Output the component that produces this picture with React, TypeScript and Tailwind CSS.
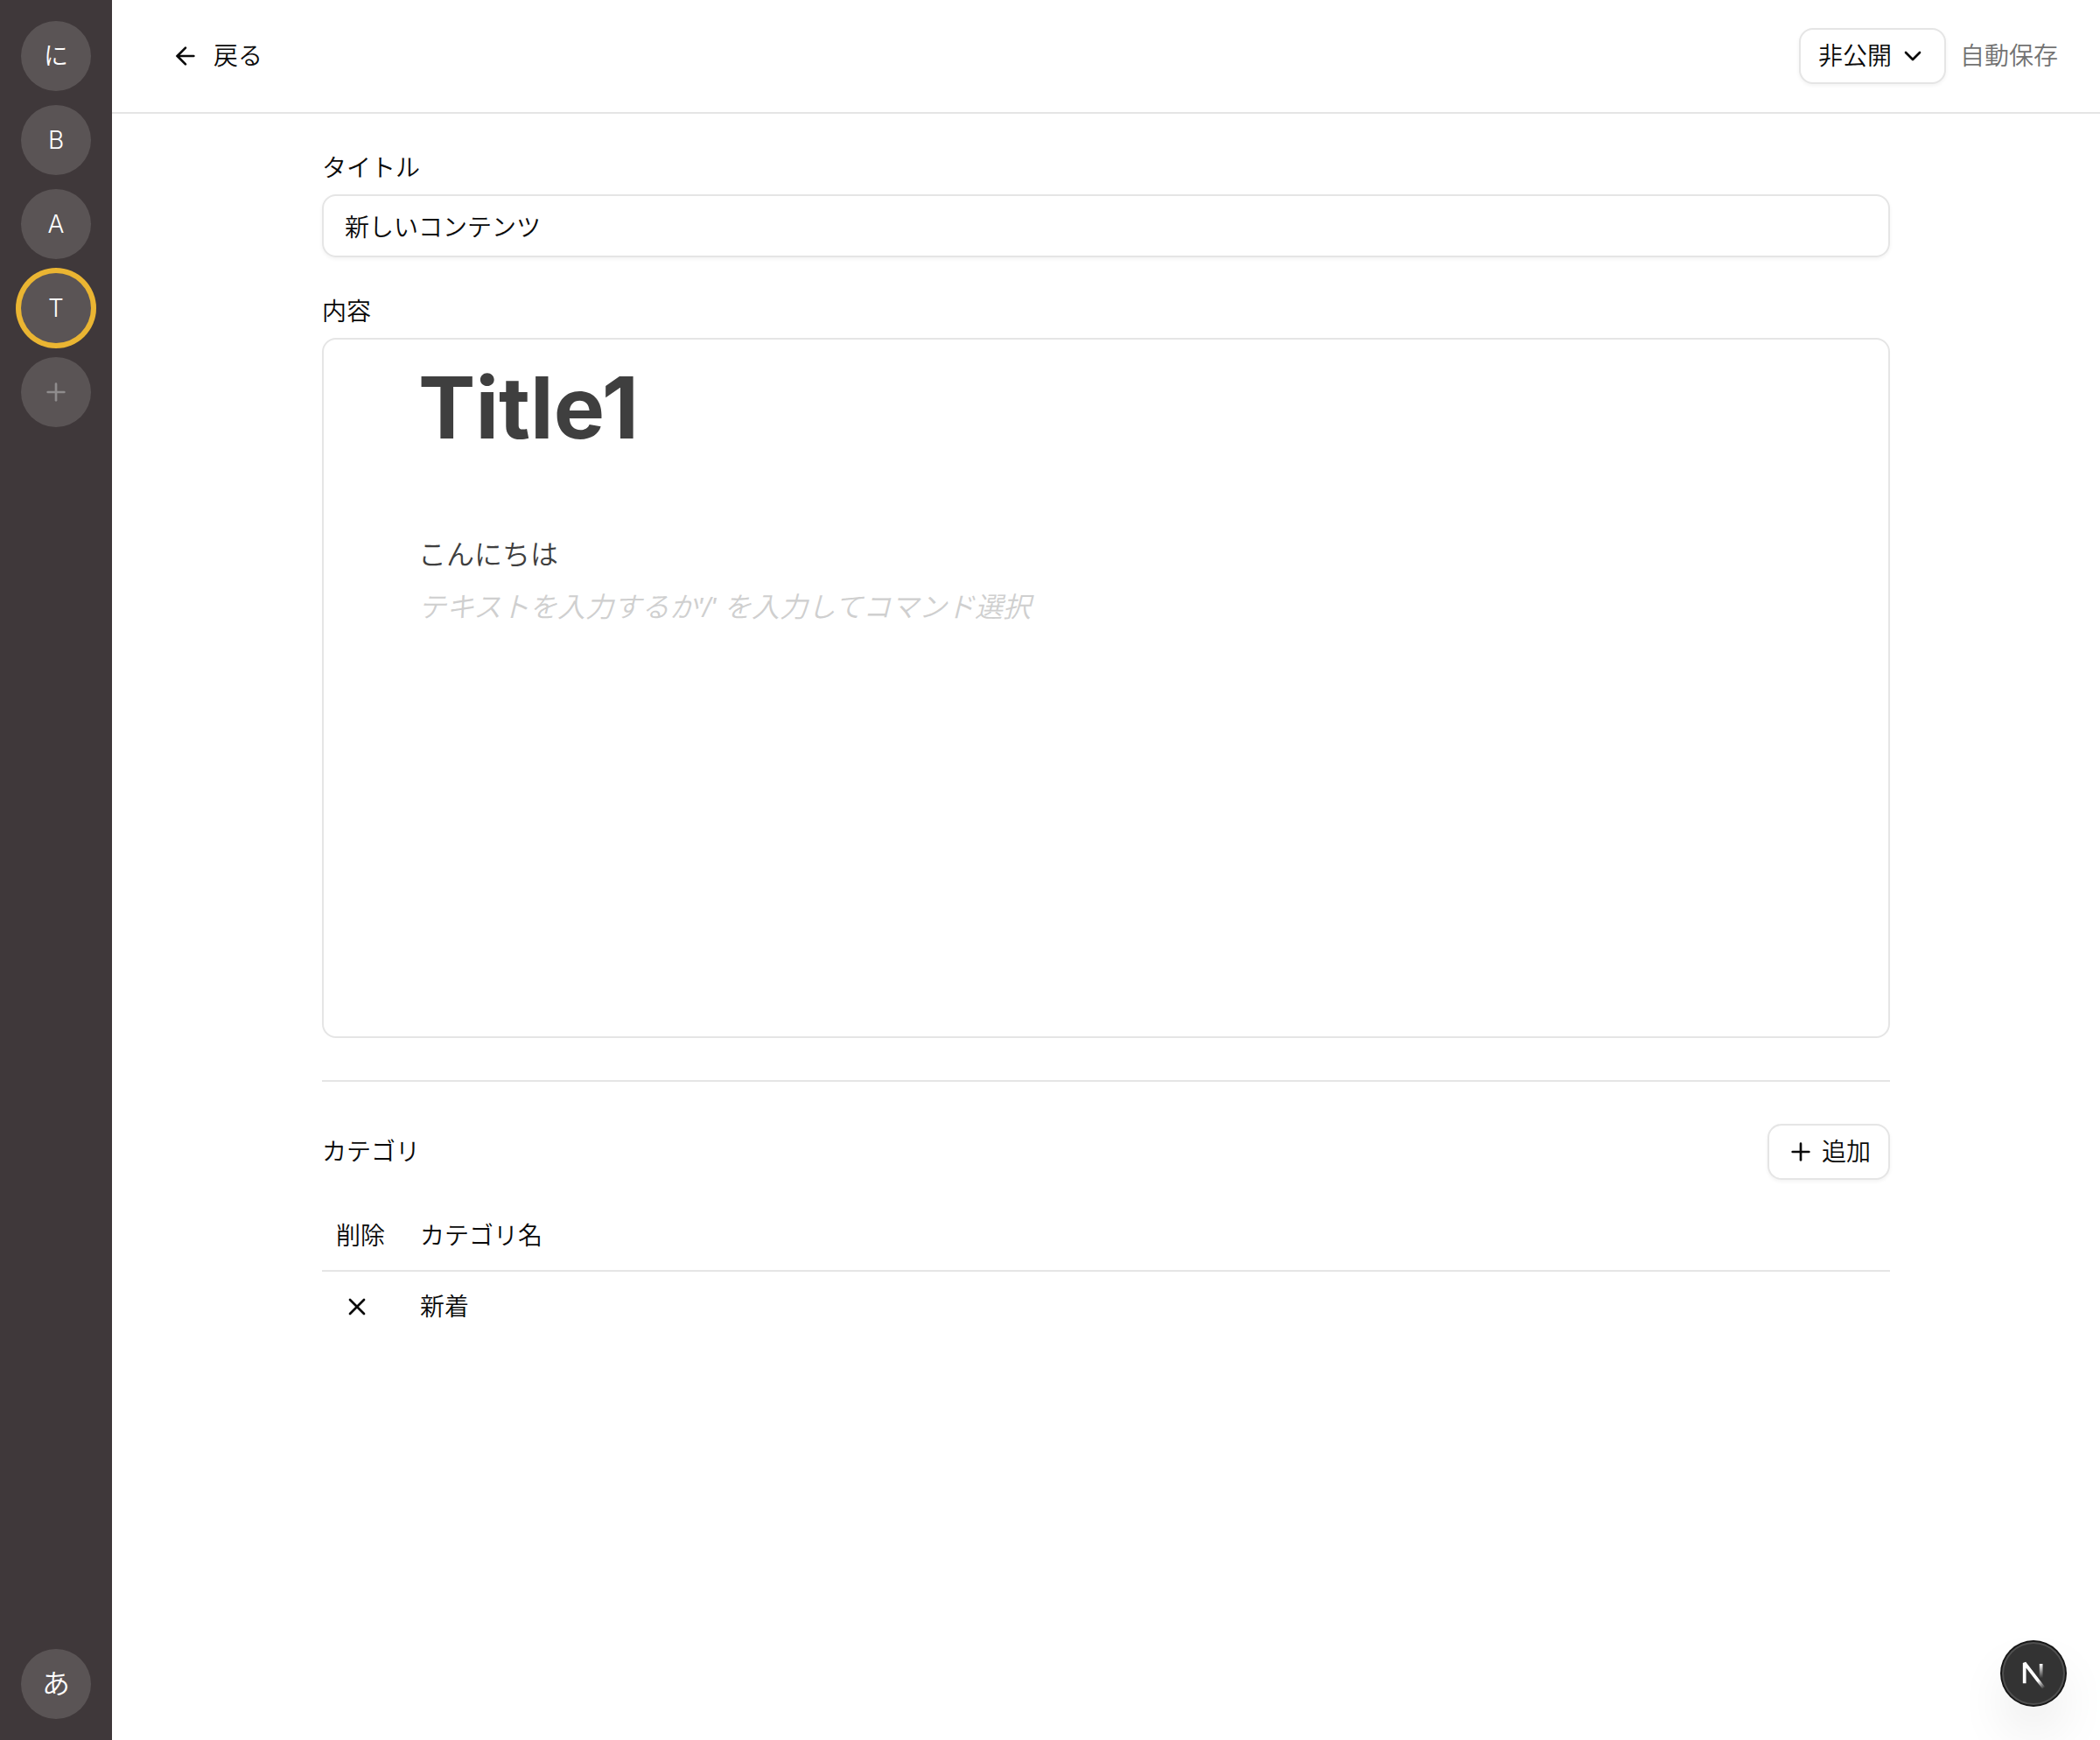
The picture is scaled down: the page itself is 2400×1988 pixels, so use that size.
import { ArrowLeft, ChevronDown, Plus, X } from "lucide-react";

const workspaces = [
  { label: "に", active: false },
  { label: "B", active: false },
  { label: "A", active: false },
  { label: "T", active: true },
];

function Sidebar() {
  return (
    <nav
      aria-label="ワークスペース"
      className="flex w-32 shrink-0 flex-col items-center gap-4 bg-[#3f383a] py-6 text-white"
    >
      {workspaces.map((w) => (
        <button
          key={w.label}
          type="button"
          className={
            w.active
              ? "size-20 rounded-full bg-[#5a5455] text-[28px] leading-none ring-6 ring-[#eab532]"
              : "size-20 rounded-full bg-[#5a5455] text-[28px] leading-none"
          }
        >
          {w.label}
        </button>
      ))}
      <button
        type="button"
        aria-label="ワークスペースを追加"
        className="flex size-20 items-center justify-center rounded-full bg-[#5a5455] text-[#8f8c8d]"
      >
        <Plus size={32} />
      </button>
      <button
        type="button"
        className="mt-auto size-20 rounded-full bg-[#5a5455] text-[32px] leading-none"
      >
        あ
      </button>
    </nav>
  );
}

function Header() {
  return (
    <header className="flex items-center justify-between border-b-2 border-neutral-200 px-12 py-8">
      <button type="button" className="flex h-16 items-center gap-4 px-5">
        <ArrowLeft size={32} />
        戻る
      </button>
      <div className="flex items-center gap-4">
        <div className="relative">
          <select
            aria-label="公開状態"
            defaultValue="private"
            className="h-16 appearance-none rounded-2xl border-2 border-neutral-200 bg-white pr-[59px] pl-5 shadow-[0_2px_4px_rgba(0,0,0,0.05)]"
          >
            <option value="private">非公開</option>
            <option value="public">公開</option>
          </select>
          <ChevronDown
            size={32}
            className="pointer-events-none absolute top-4 right-[22px]"
          />
        </div>
        <span className="text-[#737373]">自動保存</span>
      </div>
    </header>
  );
}

function Editor() {
  return (
    <div
      role="textbox"
      aria-multiline="true"
      aria-labelledby="content-label"
      contentEditable
      suppressContentEditableWarning
      className="min-h-[800px] rounded-2xl border-2 border-neutral-200 px-[108px] text-[32px] leading-[48px] text-[#3f3f3f] outline-none"
    >
      <h1 className="py-1.5 text-[98px] leading-[144px] font-bold">Title1</h1>
      <p className="min-h-[60px] py-1.5" />
      <p className="min-h-[60px] py-1.5">こんにちは</p>
      <p className="min-h-[60px] py-1.5 font-['Liberation_Sans','Noto_Sans_CJK_JP',sans-serif] text-[#cfcfcf] italic">
        テキストを入力するか'/' を入力してコマンド選択
      </p>
    </div>
  );
}

function Categories() {
  return (
    <section>
      <div className="flex items-center justify-between">
        <h2 className="leading-7 font-[350]">カテゴリ</h2>
        <button
          type="button"
          className="flex h-16 items-center gap-2 rounded-2xl border-2 border-neutral-200 bg-white px-5 shadow-[0_2px_4px_rgba(0,0,0,0.05)]"
        >
          <Plus size={32} />
          追加
        </button>
      </div>
      <table className="mt-6 w-full table-fixed text-left">
        <thead>
          <tr className="h-20 border-b-2 border-neutral-200">
            <th className="w-24 pl-4 font-[350] whitespace-nowrap">削除</th>
            <th className="px-4 font-[350]">カテゴリ名</th>
          </tr>
        </thead>
        <tbody>
          <tr className="h-20">
            <td className="pl-4">
              <button
                type="button"
                aria-label="新着を削除"
                className="flex size-12 items-center justify-center"
              >
                <X size={32} />
              </button>
            </td>
            <td className="px-4">新着</td>
          </tr>
        </tbody>
      </table>
    </section>
  );
}

function DevToolsButton() {
  return (
    <button
      type="button"
      aria-label="Next.js Dev Tools"
      className="fixed right-10 bottom-10 flex size-[72px] items-center justify-center rounded-full bg-[#333333] shadow-[0_0_0_2px_#171717,inset_0_0_0_2px_rgba(255,255,255,0.14),0_32px_64px_-16px_rgba(0,0,0,0.24)]"
    >
      <svg viewBox="0 0 40 40" fill="none" className="size-20 shrink-0">
        <defs>
          <linearGradient
            id="diagonal"
            gradientUnits="userSpaceOnUse"
            x1="9.95555"
            y1="11.1226"
            x2="13.5"
            y2="15.6"
          >
            <stop stopColor="white" />
            <stop offset="1" stopColor="white" stopOpacity="0" />
          </linearGradient>
          <linearGradient
            id="stem"
            gradientUnits="userSpaceOnUse"
            x1="11.8222"
            y1="1.40039"
            x2="11.791"
            y2="9.62542"
          >
            <stop stopColor="white" />
            <stop offset="1" stopColor="white" stopOpacity="0" />
          </linearGradient>
        </defs>
        <g transform="translate(12.5 13)">
          <path
            d="M13.3 15.2 L2.34 1 V12.6"
            stroke="url(#diagonal)"
            strokeWidth="1.86"
            strokeLinejoin="bevel"
          />
          <path d="M11.825 1.5 V13.1" stroke="url(#stem)" strokeWidth="1.86" />
        </g>
      </svg>
    </button>
  );
}

export default function App() {
  return (
    <div className="flex min-h-screen bg-white font-['Inter','Noto_Sans_CJK_JP',sans-serif] text-[28px] leading-10 font-[350] text-neutral-950">
      <Sidebar />
      <div className="min-w-0 flex-1">
        <Header />
        <main className="mx-auto flex max-w-[1792px] flex-col gap-12 py-12">
          <div className="flex flex-col gap-4">
            <label htmlFor="title" className="leading-7">
              タイトル
            </label>
            <input
              id="title"
              type="text"
              defaultValue="新しいコンテンツ"
              className="h-[72px] rounded-2xl border-2 border-neutral-200 px-6 shadow-[0_2px_4px_rgba(0,0,0,0.05)] outline-none"
            />
          </div>
          <div className="flex flex-col gap-4">
            <span id="content-label" className="leading-7">
              内容
            </span>
            <Editor />
          </div>
          <hr className="border-t-2 border-neutral-200" />
          <Categories />
        </main>
      </div>
      <DevToolsButton />
    </div>
  );
}
